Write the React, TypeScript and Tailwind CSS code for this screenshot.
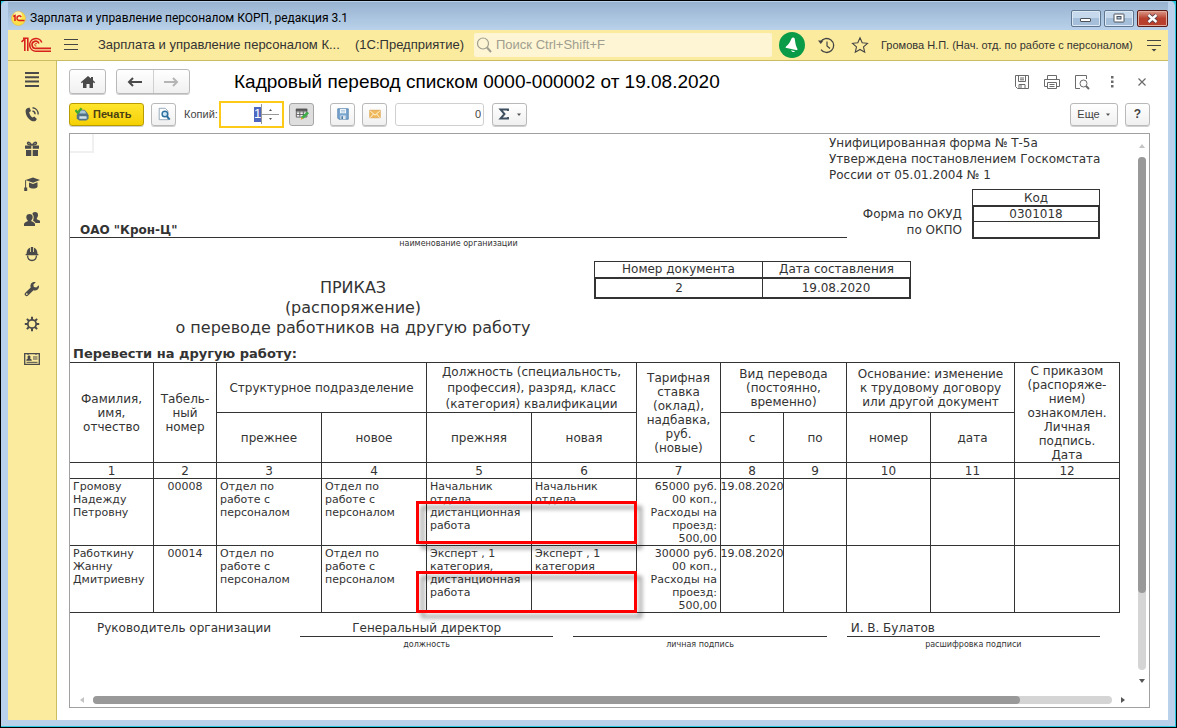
import { Fragment, type ReactNode } from "react";
import clsx from "clsx";

interface Employee {
  name: string[];
  number: string;
  oldUnit: string[];
  newUnit: string[];
  oldPost: string[];
  newPost: string[];
  rate: string[];
  from: string;
  mark: string;
}

const unit = ["Отдел по", "работе с", "персоналом"];

const employees: Employee[] = [
  {
    name: ["Громову", "Надежду", "Петровну"],
    number: "00008",
    oldUnit: unit,
    newUnit: unit,
    oldPost: ["Начальник", "отдела,", "дистанционная", "работа"],
    newPost: ["Начальник", "отдела"],
    rate: ["65000 руб.", "00 коп.,", "Расходы на", "проезд:", "500,00"],
    from: "19.08.2020",
    mark: "top-[22px] h-[43px]",
  },
  {
    name: ["Работкину", "Жанну", "Дмитриевну"],
    number: "00014",
    oldUnit: unit,
    newUnit: unit,
    oldPost: ["Эксперт , 1", "категория,", "дистанционная", "работа"],
    newPost: ["Эксперт , 1", "категория"],
    rate: ["30000 руб.", "00 коп.,", "Расходы на", "проезд:", "500,00"],
    from: "19.08.2020",
    mark: "top-[25px] h-[42px]",
  },
];

const colWidths = [84, 63, 105, 105, 105, 105, 84, 63, 63, 84, 84, 105];

const Lines = ({ items }: { items: string[] }) => (
  <>
    {items.map((line, i) => (
      <Fragment key={i}>
        {i > 0 && <br />}
        {line}
      </Fragment>
    ))}
  </>
);

const Icon = ({ size = 16, box = 16, children }: { size?: number; box?: number; children: ReactNode }) => (
  <svg width={size} height={size} viewBox={`0 0 ${box} ${box}`} fill="none" aria-hidden="true" className="shrink-0">
    {children}
  </svg>
);

const ToolButton = ({ label, className, children }: { label: string; className?: string; children: ReactNode }) => (
  <button
    aria-label={label}
    className={clsx(
      "flex h-[23px] shrink-0 items-center justify-center rounded-[3px] border border-[#b9b9b9] bg-linear-to-b from-white to-[#f0f0f0] shadow-[0_1px_0_#d0d0d0]",
      className
    )}
  >
    {children}
  </button>
);

const sections = [
  {
    label: "Главное",
    icon: <path d="M1 2h14M1 6.3h14M1 10.6h14M1 15h14" stroke="#4a4a4a" strokeWidth="2" />,
  },
  {
    label: "Кадры",
    icon: (
      <>
        <path
          d="M3.2 2.3 5.4 1.6 7 5 5.2 6.2c.3 2 1.500 4 3.300 5.200l1.800-1 2.600 2.600-1.200 1.700c-1 .8-2.600.8-3.900.2C4.300 13.300 1.700 9.400 1.600 5.300c0-1.200.6-2.300 1.600-3z"
          fill="#4a4a4a"
        />
        <path d="M8.500 5c1.600.3 2.600 1.600 2.600 3.300M8.500 1.800c3.400.3 5.800 3 5.700 6.600" stroke="#4a4a4a" strokeWidth="1.400" />
      </>
    ),
  },
  {
    label: "Зарплата",
    icon: (
      <>
        <path d="M1 4.500h6.300v3.300H1zM8.700 4.500H15v3.300H8.700zM2 9h5.300v6H2zM8.700 9H14v6H8.700z" fill="#4a4a4a" />
        <path d="M7.500 4C6 1 3.800 .8 3.500 2.200 3.300 3.500 5.500 4 8 4c2.500 0 4.700-.5 4.500-1.800C12.200.8 10 1 8.500 4" stroke="#4a4a4a" strokeWidth="1.500" />
      </>
    ),
  },
  {
    label: "Обучение",
    icon: (
      <>
        <path d="M9 1.500 16 4 9 6.800 1.500 4z" fill="#4a4a4a" />
        <path d="M5 6.500 9 8l4.500-1.700V11c-2 2-6.500 2-8.500 0z" fill="#4a4a4a" />
        <path d="M1.600 4.200V12" stroke="#4a4a4a" />
        <path d="M.2 11.500h3V15h-3z" fill="#4a4a4a" />
      </>
    ),
  },
  {
    label: "Персонал",
    icon: (
      <>
        <path d="M11 1c2 0 3 1.300 3 3 0 1.400-.5 2.500-1.200 3.200v1l3.200 1.600V12h-4.500c-.6-1.500-2.200-2-2.500-2.500C10 8 10 4 8.300 3 8.600 1.800 9.600 1 11 1z" fill="#4a4a4a" />
        <path d="M5.500 3C7.500 3 8.700 4.300 8.700 6c0 1.500-.6 2.700-1.400 3.300v1c2 .9 3.700 1.300 3.700 3.200V15H0v-1.500c0-1.900 1.700-2.300 3.700-3.200v-1C2.900 8.700 2.300 7.500 2.300 6c0-1.700 1.200-3 3.200-3z" fill="#4a4a4a" />
      </>
    ),
  },
  {
    label: "Охрана труда",
    icon: (
      <>
        <path d="M2.500 8C2.500 4.500 4 2.300 6 1.700V6h.8V1h2.400v5h.8V1.700c2 .6 3.500 2.800 3.500 6.300h.9v1.200H1.600V8z" fill="#4a4a4a" />
        <path d="M3.500 9.500c.2 3 2 5 4.500 5s4.300-2 4.500-5" stroke="#4a4a4a" strokeWidth="1.300" />
      </>
    ),
  },
  {
    label: "Настройка",
    icon: (
      <path
        d="M14.800 4.200 12.300 6.600 9.800 6 9.400 3.600 11.800 1.200C10 .6 8 1.200 7 2.800c-.7 1.200-.7 2.500-.3 3.600L1.300 11.800c-.9.9-.9 2 0 2.800.8.800 2 .8 2.800 0l5.400-5.300c1.400.5 3 .3 4.200-.8 1.200-1.200 1.600-2.800 1.100-4.300zM2.800 14a.9.9 0 1 1 0-1.800.9.9 0 0 1 0 1.800z"
        fill="#4a4a4a"
      />
    ),
  },
  {
    label: "Администрирование",
    icon: (
      <>
        <circle cx="8" cy="8" r="4.200" stroke="#4a4a4a" strokeWidth="1.800" />
        <path
          d="M8 .8v3M8 12.200v3M.8 8h3M12.200 8h3M2.900 2.900 5 5M11 11l2.100 2.100M2.900 13.100 5 11M11 5l2.100-2.100"
          stroke="#4a4a4a"
          strokeWidth="2"
        />
      </>
    ),
  },
  {
    label: "Пропуска",
    icon: (
      <>
        <path d="M.7 2.700h14.600v10.600H.7z" stroke="#4a4a4a" strokeWidth="1.300" />
        <path d="M4 2v2M12 2v2M9 6h4.500M9 8h4.500M2.500 11.300h11" stroke="#4a4a4a" />
        <path d="M5 4.500c1 0 1.500.7 1.500 1.600 0 .7-.3 1.200-.6 1.500C7 8 7.800 8.300 7.800 9.800H2.300C2.300 8.300 3 8 4.100 7.600c-.4-.3-.6-.8-.6-1.500 0-.9.5-1.600 1.500-1.600z" fill="#4a4a4a" />
      </>
    ),
  },
];

const TitleBar = () => (
  <div className="flex h-7 shrink-0 items-center bg-linear-to-b from-[#98b3d1] to-[#b9d1ea] pt-1 pl-[3px] font-[Roboto,sans-serif] text-[12px] text-black">
    <svg width="15" height="15" viewBox="0 0 15 15" fill="none" className="mr-1 shrink-0" aria-hidden="true">
      <circle cx="7.500" cy="7.500" r="7" fill="#fbe04a" stroke="#e8b83a" strokeWidth=".6" />
      <circle cx="7" cy="4.500" r="4" fill="#fff6c4" opacity=".8" />
      <path d="M2.300 5.500 4 4.500V10" stroke="#d8201c" strokeWidth="1.500" />
      <path d="M10.200 6A2.300 2.300 0 1 0 8.300 9.500H13.500" stroke="#d8201c" strokeWidth="1.500" />
    </svg>
    <span className="grow whitespace-nowrap">Зарплата и управление персоналом КОРП, редакция 3.1</span>
    <div className="flex gap-[3px]">
      <button aria-label="Свернуть" className="flex h-[17px] w-[30px] items-center justify-center rounded-[2px] border border-[#5f7690] bg-linear-to-b from-[#c5d8ec] from-50% to-[#a5bfdb] to-50% shadow-[inset_0_0_0_1px_#dce8f4]">
        <svg width="12" height="6" viewBox="0 0 12 6" className="mt-1">
          <rect x=".5" y="1.500" width="10" height="3" rx=".5" fill="#fff" stroke="#4c525c" />
        </svg>
      </button>
      <button aria-label="Развернуть" className="flex h-[17px] w-[30px] items-center justify-center rounded-[2px] border border-[#5f7690] bg-linear-to-b from-[#c5d8ec] from-50% to-[#a5bfdb] to-50% shadow-[inset_0_0_0_1px_#dce8f4]">
        <svg width="12" height="10" viewBox="0 0 12 10">
          <rect x="1" y="1" width="10" height="8" rx=".5" fill="#fff" stroke="#4c525c" />
          <rect x="4" y="3.500" width="4" height="2.500" fill="#a9c4df" stroke="#4c525c" />
        </svg>
      </button>
      <button aria-label="Закрыть" className="flex h-[17px] w-[31px] items-center justify-center rounded-[2px] border border-[#5c1a14] bg-linear-to-b from-[#d8988a] to-[#b8402c] to-50% shadow-[inset_0_0_0_1px_#e4ab9f]">
        <svg width="13" height="11" viewBox="0 0 13 11">
          <path d="m2.500 2 8 7M10.500 2l-8 7" stroke="#4c3a48" strokeWidth="4" />
          <path d="m2.500 2 8 7M10.500 2l-8 7" stroke="#fff" strokeWidth="2.400" />
        </svg>
      </button>
    </div>
  </div>
);

const AppHeader = () => (
  <header className="flex h-[31px] shrink-0 items-center border-b border-[#c9bc62] bg-[#fbeb9e] pr-[6px] pl-[13px] text-[13px] text-[#333]">
    <svg width="30" height="16" viewBox="0 0 30 16" fill="none" className="shrink-0" aria-label="1С">
      <g stroke="#d8201c" strokeWidth="1.600">
        <path d="M.5 4.800 3.800 1.900V14M2 1.200H6.800V14" />
        <path d="M20.800 5.500A6.300 6.300 0 1 0 15 14.200H30" />
        <path d="M18 6.500A3.600 3.600 0 1 0 15 11.400H30" />
        <path d="M16 6.900a1.300 1.300 0 1 0-.6 2.200" strokeWidth="1" />
      </g>
    </svg>
    <button aria-label="Меню" className="ml-[13px]">
      <Icon size={14} box={14}>
        <path d="M0 1.500h14M0 6.500h14M0 11.500h14" stroke="#444" />
      </Icon>
    </button>
    <span className="ml-5 w-[257px] shrink-0 whitespace-nowrap">Зарплата и управление персоналом К...</span>
    <span className="w-[119px] shrink-0 whitespace-nowrap">(1С:Предприятие)</span>
    <div className="flex h-6 grow items-center gap-1 rounded-[2px] bg-[#fdf5d3] pl-[2px]">
      <Icon size={16}>
        <circle cx="7" cy="6.500" r="5.500" stroke="#a09e90" strokeWidth="1.200" />
        <path d="m11 10.500 4 4.500" stroke="#a09e90" strokeWidth="2" />
      </Icon>
      <input
        aria-label="Поиск"
        placeholder="Поиск Ctrl+Shift+F"
        className="min-w-0 grow bg-transparent outline-none placeholder:text-[#a09e90]"
      />
    </div>
    <button aria-label="Оповещения" className="ml-[7px]">
      <Icon size={26} box={26}>
        <circle cx="13" cy="13" r="13" fill="#0a9b48" />
        <path d="M13.800 5.500c1.200-.2 1.900.6 2 1.700.6 4.500 1.200 7.300 2.700 9.800l-.3 1.300L6.500 15.800l.5-1.300c2.500-1.700 3.700-4 5.300-7.500.3-.9.800-1.400 1.500-1.500z" fill="#fff" />
        <path d="m12 18.300 4 .9c-.8 1.400-3.400 1-4-.9z" fill="#fff" />
      </Icon>
    </button>
    <button aria-label="История" className="ml-[13px]">
      <Icon size={17} box={17}>
        <path d="M2.600 5A7 7 0 1 1 3 12.600" stroke="#444" strokeWidth="1.300" />
        <path d="M0 3.500h5.500L2.800 7z" fill="#444" />
        <path d="M9 4.500V9l3 2.500" stroke="#444" strokeWidth="1.200" />
      </Icon>
    </button>
    <button aria-label="Избранное" className="ml-4">
      <Icon size={18} box={18}>
        <path d="m9 1.800 2.200 4.900 5.300.6-4 3.600 1.200 5.300L9 13.500l-4.700 2.700 1.200-5.300-4-3.600 5.300-.6z" stroke="#444" strokeWidth="1.100" />
      </Icon>
    </button>
    <span className="ml-3 w-[265px] shrink-0 text-[11px] whitespace-nowrap">Громова Н.П. (Нач. отд. по работе с персоналом)</span>
    <button aria-label="Сервис">
      <Icon size={16}>
        <path d="M1 3.500h14M1 8.500h14" stroke="#444" />
        <path d="M5.500 12h5L8 14.500z" fill="#444" />
      </Icon>
    </button>
  </header>
);

const TitleRow = () => (
  <div className="flex h-[25px] shrink-0 items-center">
    <ToolButton label="Домой" className="h-[25px] w-[37px]">
      <Icon size={16}>
        <path d="M8 2 .8 8.200l1 1L3 8.200V14h3.500v-4h3v4H13V8.200l1.200 1 1-1L13 6.200V3h-2v1.500z" fill="#4a4a4a" />
      </Icon>
    </ToolButton>
    <div className="ml-[10px] flex h-[25px] w-[74px] shrink-0 rounded-[3px] border border-[#b9b9b9] bg-linear-to-b from-white to-[#f0f0f0] shadow-[0_1px_0_#d0d0d0]">
      <button aria-label="Назад" className="flex grow items-center justify-center border-r border-[#d0d0d0]">
        <Icon size={16}>
          <path d="M2 8h13M6 4 2 8l4 4" stroke="#4a4a4a" strokeWidth="2" />
        </Icon>
      </button>
      <button aria-label="Вперед" className="flex grow items-center justify-center">
        <Icon size={16}>
          <path d="M1 8h13M10 4l4 4-4 4" stroke="#b5b5b5" strokeWidth="2" />
        </Icon>
      </button>
    </div>
    <h1 className="ml-11 grow text-[19px] leading-6 whitespace-nowrap text-black">
      Кадровый перевод списком 0000-000002 от 19.08.2020
    </h1>
    <div className="flex items-center gap-[14px]">
      <button aria-label="Сохранить">
        <Icon size={16}>
          <path d="M1.500 1.500h13v13h-11l-2-2z" stroke="#6a6a6a" />
          <path d="M4.500 2v5.500h7V2M6 4h4M6 5.800h4M5 14v-3.500h6V14M7 11v3" stroke="#6a6a6a" />
        </Icon>
      </button>
      <button aria-label="Печать">
        <Icon size={16}>
          <path d="M3.500 5V1.500h9V5M3 12.500H.5v-7h15v7H13M3.500 8.500h9v6h-9zM5.500 10.500h5M5.500 12.500h5" stroke="#6a6a6a" />
        </Icon>
      </button>
      <button aria-label="Просмотр">
        <Icon size={16}>
          <path d="M6 14.500H1.500v-13h11V5" stroke="#6a6a6a" />
          <circle cx="9.500" cy="9.500" r="3.500" stroke="#6a6a6a" />
          <path d="m12 12 3 3" stroke="#6a6a6a" strokeWidth="2" />
        </Icon>
      </button>
      <button aria-label="Еще действия">
        <Icon size={16}>
          <path d="M7 2h2.500v2.500H7zM7 6.500h2.500V9H7zM7 11h2.500v2.500H7z" fill="#6a6a6a" />
        </Icon>
      </button>
      <button aria-label="Закрыть вкладку">
        <Icon size={16}>
          <path d="m4.500 4.500 7 7M11.500 4.500l-7 7" stroke="#6a6a6a" strokeWidth="1.200" />
        </Icon>
      </button>
    </div>
  </div>
);

const Toolbar = () => (
  <div className="mt-[7px] flex h-[26px] shrink-0 items-center text-[11px] text-[#444]">
    <button className="flex h-[23px] w-[75px] shrink-0 items-center gap-1 rounded-[3px] border border-[#b89c00] bg-linear-to-b from-[#ffe52b] to-[#f5d000] pl-[5px] font-bold text-[#4a4012] shadow-[0_1px_0_#d0d0d0]">
      <Icon size={14}>
        <path d="M5 3h6l3 3.500 1.500 3v4L13 15.500H5l-3-2v-4z" fill="#557386" />
        <path d="M6 4h5l2 3.500H5z" fill="#a9c8d6" />
        <path d="M5 10.500h8l.5 3H5z" fill="#d3e3ea" />
        <path d="m.5 3.500 2.500 3L7.500 1.500" stroke="#43a832" strokeWidth="2.600" />
      </Icon>
      Печать
    </button>
    <ToolButton label="Предварительный просмотр" className="ml-[7px] w-[25px]">
      <Icon size={14}>
        <path d="M2.500 1.500h7l3 3v10h-10z" fill="#fff" stroke="#8aa0b4" />
        <circle cx="9" cy="8" r="3.200" fill="#cfe6f5" stroke="#2c6f9e" strokeWidth="1.600" />
        <path d="m11.200 10.500 3.300 4" stroke="#2c6f9e" strokeWidth="2.200" />
      </Icon>
    </ToolButton>
    <label htmlFor="copies" className="ml-[8px] w-[35px] shrink-0">
      Копий:
    </label>
    <div className="flex h-[27px] w-[65px] shrink-0 items-center justify-end border-2 border-[#fcca17] bg-white pr-[3px]">
      <input id="copies" defaultValue="1" className="h-[15px] w-[7px] bg-[#4d66c0] text-[13px] text-white outline-none" />
      <svg width="18" height="20" viewBox="0 0 18 20" fill="none" aria-hidden="true">
        <path d="M.5 0v20M1 10.500h17" stroke="#999" />
        <path d="M8 7h3L9.500 5zM8 14h3l-1.500 2z" fill="#555" />
      </svg>
    </div>
    <button aria-label="Редактирование" className="ml-[5px] flex h-[23px] w-[25px] shrink-0 items-center justify-center rounded-[3px] border border-[#a6a6a6] bg-[#dedede]">
      <Icon size={14}>
        <path d="M1.500 2.500h12v9h-12zM1.500 5.500h12M1.500 8.500h12M5.500 5v6M9.500 5v6" fill="#f4f4f4" stroke="#555" />
        <path d="M1 2h13v2.500H1z" fill="#555" />
        <path d="m7 14 1-3.500 6-5.500 2 2.200L10 13z" fill="#3fae49" />
        <path d="m6.500 14.500 1-3 2 2z" fill="#e0a030" />
      </Icon>
    </button>
    <ToolButton label="Сохранить на диск" className="ml-4 w-[25px]">
      <Icon size={12}>
        <path d="M1 1h14v14H2.500L1 13.500z" fill="#7aa6cf" stroke="#4a7aa5" />
        <path d="M4 1.500h8V7H4z" fill="#fff" />
        <path d="M5 3.500h6M5 5.300h6" stroke="#8fb4d2" />
        <path d="M4.500 10h7v5h-7z" fill="#dce7f0" />
        <path d="M6 11h1.800v3.500H6z" fill="#34648f" />
      </Icon>
    </ToolButton>
    <ToolButton label="Отправить" className="ml-[7px] w-[25px]">
      <Icon size={12}>
        <path d="M1 3h14v10H1z" fill="#f0b95c" stroke="#d9a04a" />
        <path d="m1.500 4 6.500 5.500L14.500 4M1.500 13 6 8M14.500 13 10 8" stroke="#fff3da" strokeWidth="1.300" />
      </Icon>
    </ToolButton>
    <input
      aria-label="Сумма"
      defaultValue="0"
      className="ml-2 h-[23px] w-[89px] shrink-0 rounded-[3px] border border-[#d0d0d0] bg-white pr-[2px] text-right outline-none"
    />
    <ToolButton label="Показатели" className="ml-2 w-[35px] gap-[7px]">
      <Icon size={12} box={12}>
        <path d="M10 3V1.500H2.500L6.500 6l-4 4.500H10V9" stroke="#3d4f5e" strokeWidth="1.900" />
      </Icon>
      <Icon size={5} box={5}>
        <path d="M0 1.500h4L2 4z" fill="#555" />
      </Icon>
    </ToolButton>
    <span className="grow" />
    <ToolButton label="Еще" className="w-[48px] gap-[6px]">
      Еще
      <Icon size={5} box={5}>
        <path d="M0 1.500h4L2 4z" fill="#555" />
      </Icon>
    </ToolButton>
    <ToolButton label="Справка" className="ml-[7px] w-[25px] text-[12px] font-bold">
      ?
    </ToolButton>
  </div>
);

const FormHead = () => (
  <>
    <div className="flex items-start justify-between">
      <div className="h-[19px] w-6 border-r-2 border-b-2 border-[#f0f0f0]" />
      <p className="mt-px w-[291px] leading-4">
        Унифицированная форма № Т-5а
        <br />
        Утверждена постановлением Госкомстата
        <br />
        России от 05.01.2004 № 1
      </p>
    </div>

    <div className="mt-[6px] flex items-start pr-5">
      <div className="grow">
        <div className="flex h-[49px] items-end border-b border-[#333] pl-[10px] leading-[14px] font-bold">ОАО "Крон-Ц"</div>
        <div className="text-center text-[8px] leading-[12px]">наименование организации</div>
      </div>
      <div className="mt-[17px] w-[115px] text-right leading-4">
        Форма по ОКУД
        <br />
        по ОКПО
      </div>
      <table className="ml-[10px] w-32 border-separate border-spacing-0 text-center leading-[14px]">
        <thead>
          <tr>
            <th className="h-4 border border-b-0 border-[#333] p-0 font-normal">Код</th>
          </tr>
        </thead>
        <tbody>
          <tr>
            <td className="h-[17px] border-2 border-b border-[#333] p-0">0301018</td>
          </tr>
          <tr>
            <td className="h-[17px] border-2 border-t-0 border-[#333] p-0" />
          </tr>
        </tbody>
      </table>
    </div>

    <div className="mt-[11px] flex items-start">
      <h2 className="mt-[17px] w-[524px] pl-[42px] text-center text-[16px] leading-5">
        ПРИКАЗ
        <br />
        (распоряжение)
        <br />о переводе работников на другую работу
      </h2>
      <table className="w-[317px] table-fixed border-separate border-spacing-0 text-center leading-[15px]">
        <colgroup>
          <col className="w-[169px]" />
          <col />
        </colgroup>
        <thead>
          <tr>
            <th className="h-4 border border-b-0 border-[#333] p-0 font-normal">Номер документа</th>
            <th className="h-4 border border-b-0 border-l-0 border-[#333] p-0 font-normal">Дата составления</th>
          </tr>
        </thead>
        <tbody>
          <tr>
            <td className="h-[22px] border-2 border-r border-[#333] p-0">2</td>
            <td className="h-[22px] border-2 border-l-0 border-[#333] p-0">19.08.2020</td>
          </tr>
        </tbody>
      </table>
    </div>
    <h3 className="mt-2 pl-[3px] text-[13px] leading-4 font-bold">Перевести на другую работу:</h3>
  </>
);

const th = "border-r border-b border-[#333] p-0 font-normal";
const td = "h-[67px] border-r border-b border-[#333] px-[3px] pt-px pb-0 align-top";

const TransferTable = () => (
  <table className="w-full table-fixed border-separate border-spacing-0 border-t border-[#333] text-center leading-[14px]">
    <colgroup>
      {colWidths.map((w, i) => (
        <col key={i} style={{ width: w }} />
      ))}
    </colgroup>
    <thead>
      <tr>
        <th rowSpan={2} className={th}><Lines items={["Фамилия,", "имя,", "отчество"]} /></th>
        <th rowSpan={2} className={th}><Lines items={["Табель-", "ный", "номер"]} /></th>
        <th colSpan={2} className={clsx(th, "h-[50px]")}>Структурное подразделение</th>
        <th colSpan={2} className={clsx(th, "leading-4")}>
          <Lines items={["Должность (специальность,", "профессия), разряд, класс", "(категория) квалификации"]} />
        </th>
        <th rowSpan={2} className={th}>
          <Lines items={["Тарифная", "ставка", "(оклад),", "надбавка,", "руб.", "(новые)"]} />
        </th>
        <th colSpan={2} className={th}><Lines items={["Вид перевода", "(постоянно,", "временно)"]} /></th>
        <th colSpan={2} className={th}>
          <Lines items={["Основание: изменение", "к трудовому договору", "или другой документ"]} />
        </th>
        <th rowSpan={2} className={th}>
          <Lines items={["С приказом", "(распоряже-", "нием)", "ознакомлен.", "Личная", "подпись.", "Дата"]} />
        </th>
      </tr>
      <tr>
        {["прежнее", "новое", "прежняя", "новая", "с", "по", "номер", "дата"].map((name) => (
          <th key={name} className={clsx(th, "h-[50px]")}>{name}</th>
        ))}
      </tr>
      <tr>
        {colWidths.map((_, i) => (
          <th key={i} className={clsx(th, "h-4")}>{i + 1}</th>
        ))}
      </tr>
    </thead>
    <tbody className="text-[11px] leading-[13px]">
      {employees.map((e) => (
        <tr key={e.number}>
          <td className={clsx(td, "text-left")}><Lines items={e.name} /></td>
          <td className={td}>{e.number}</td>
          <td className={clsx(td, "text-left")}><Lines items={e.oldUnit} /></td>
          <td className={clsx(td, "text-left")}><Lines items={e.newUnit} /></td>
          <td className={clsx(td, "relative text-left whitespace-nowrap")}>
            <Lines items={e.oldPost} />
            <div
              className={clsx(
                "absolute -right-[106px] -left-[11px] border-3 border-[#ff0000] drop-shadow-[5px_5px_2px_rgba(0,0,0,0.4)]",
                e.mark
              )}
            />
          </td>
          <td className={clsx(td, "text-left")}><Lines items={e.newPost} /></td>
          <td className={clsx(td, "text-right whitespace-nowrap")}><Lines items={e.rate} /></td>
          <td className={td}>
            <div className="flex justify-center whitespace-nowrap">{e.from}</div>
          </td>
          <td className={td} />
          <td className={td} />
          <td className={td} />
          <td className={td} />
        </tr>
      ))}
    </tbody>
  </table>
);

const Signatures = () => (
  <div className="mt-2 grid grid-cols-[183px_1fr_1fr_1fr] gap-x-5 pr-5 pl-[27px] leading-[15px]">
    <span className="whitespace-nowrap">Руководитель организации</span>
    {[
      ["Генеральный директор", "должность"],
      ["", "личная подпись"],
      ["И. В. Булатов", "расшифровка подписи"],
    ].map(([value, caption], i) => (
      <div key={caption} className="text-center">
        <div className={clsx("h-4 border-b border-[#333]", i === 2 && "pl-1 text-left")}>{value}</div>
        <div className="mt-[2px] text-[8px] leading-[12px]">{caption}</div>
      </div>
    ))}
  </div>
);

const Arrow = ({ label, d, off, className }: { label: string; d: string; off?: boolean; className: string }) => (
  <button aria-label={label} className={clsx("flex shrink-0 items-center justify-center", className)}>
    <Icon size={6} box={6}>
      <path d={d} fill={off ? "#c4c4c4" : "#555"} />
    </Icon>
  </button>
);

const Sheet = () => (
  <div className="mt-[6px] flex min-h-0 grow flex-col border border-[#a0a0a0] bg-white">
    <div className="flex min-h-0 grow">
      <div className="min-w-0 grow overflow-hidden font-['DejaVu_Sans',sans-serif] text-[12px] text-[#333]">
        <FormHead />
        <TransferTable />
        <Signatures />
      </div>
      <div className="flex w-[29px] shrink-0 flex-col items-center pl-[15px]">
        <Arrow label="Вверх" d="M0 5h6L3 1z" off className="h-[23px] w-[14px]" />
        <div className="w-2 grow rounded-full bg-[#d5d5d5]">
          <div className="h-[85%] rounded-full bg-[#999]" />
        </div>
        <Arrow label="Вниз" d="M0 1h6L3 5z" className="h-[22px] w-[14px]" />
      </div>
    </div>
    <div className="flex h-[15px] shrink-0 items-center pr-[15px]">
      <Arrow label="Влево" d="M5 0v6L1 3z" off className="h-full w-[23px]" />
      <div className="h-2 grow rounded-full bg-[#d5d5d5]">
        <div className="h-full w-[91%] rounded-full bg-[#999]" />
      </div>
      <Arrow label="Вправо" d="M1 0v6l4-3z" className="h-full w-[22px]" />
    </div>
  </div>
);

const App = () => (
  <div className="h-screen w-full overflow-hidden border border-black bg-[#2bc8e0] font-['Liberation_Sans',Arial,sans-serif]">
    <div className="flex h-full flex-col pr-px pb-px">
      <div className="flex min-h-0 grow flex-col rounded-t-[5px] bg-[#b9d1ea] px-[7px] pt-px pb-[6px]">
        <TitleBar />
        <AppHeader />
        <div className="flex min-h-0 grow">
          <nav className="flex w-[49px] shrink-0 flex-col items-center border-r border-[#c9bc62] bg-[#fbeb9e]">
            {sections.map((s) => (
              <button key={s.label} aria-label={s.label} className="flex h-[35px] w-full items-center justify-center">
                {s.icon && <Icon>{s.icon}</Icon>}
              </button>
            ))}
          </nav>
          <main className="flex min-w-0 grow flex-col bg-white px-3 pt-2 pb-3 pr-[18px]">
            <TitleRow />
            <Toolbar />
            <Sheet />
          </main>
        </div>
      </div>
    </div>
  </div>
);

export default App;
